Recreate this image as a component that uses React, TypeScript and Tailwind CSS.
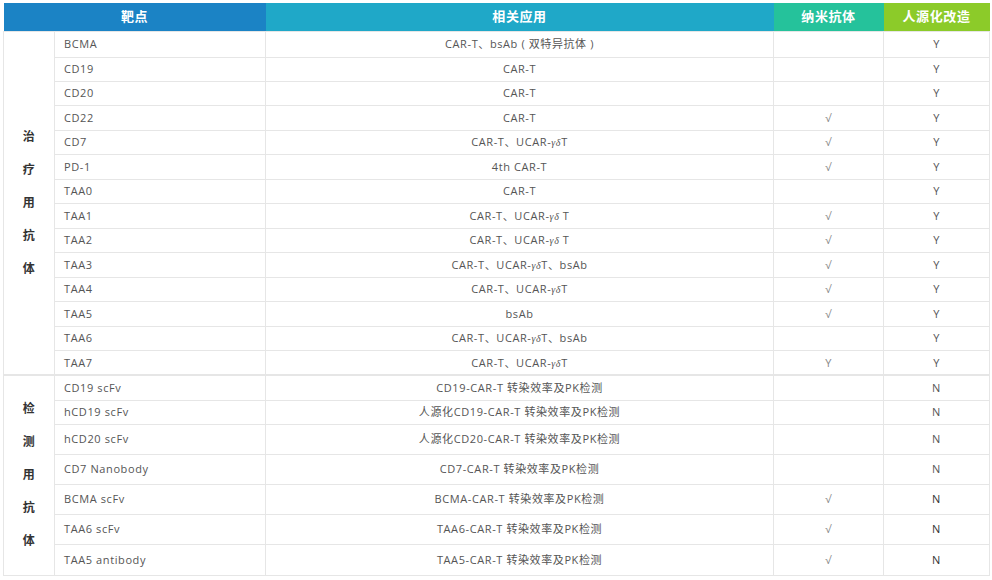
import React from 'react';

type Row = { target: string; app: React.ReactNode; nano?: string; human: string; h: string };

const gd = <span className="italic text-[10px]" style={{ fontFamily: '"Liberation Serif", serif' }}>γδ</span>;

const treat: Row[] = [
    { target: 'BCMA', app: 'CAR-T、bsAb ( 双特异抗体 )', human: 'Y', h: 'h-[26px]' },
    { target: 'CD19', app: 'CAR-T', human: 'Y', h: 'h-[24px]' },
    { target: 'CD20', app: 'CAR-T', human: 'Y', h: 'h-[24px]' },
    { target: 'CD22', app: 'CAR-T', nano: '√', human: 'Y', h: 'h-[25px]' },
    { target: 'CD7', app: <>CAR-T、UCAR-{gd}T</>, nano: '√', human: 'Y', h: 'h-[24px]' },
    { target: 'PD-1', app: '4th CAR-T', nano: '√', human: 'Y', h: 'h-[25px]' },
    { target: 'TAA0', app: 'CAR-T', human: 'Y', h: 'h-[24px]' },
    { target: 'TAA1', app: <>CAR-T、UCAR-{gd} T</>, nano: '√', human: 'Y', h: 'h-[25px]' },
    { target: 'TAA2', app: <>CAR-T、UCAR-{gd} T</>, nano: '√', human: 'Y', h: 'h-[24px]' },
    { target: 'TAA3', app: <>CAR-T、UCAR-{gd}T、bsAb</>, nano: '√', human: 'Y', h: 'h-[25px]' },
    { target: 'TAA4', app: <>CAR-T、UCAR-{gd}T</>, nano: '√', human: 'Y', h: 'h-[24px]' },
    { target: 'TAA5', app: 'bsAb', nano: '√', human: 'Y', h: 'h-[25px]' },
    { target: 'TAA6', app: <>CAR-T、UCAR-{gd}T、bsAb</>, human: 'Y', h: 'h-[24px]' },
    { target: 'TAA7', app: <>CAR-T、UCAR-{gd}T</>, nano: 'Y', human: 'Y', h: 'h-[25px]' },
];

const detect: Row[] = [
    { target: 'CD19 scFv', app: 'CD19-CAR-T 转染效率及PK检测', human: 'N', h: 'h-[25px]' },
    { target: 'hCD19 scFv', app: '人源化CD19-CAR-T 转染效率及PK检测', human: 'N', h: 'h-[24px]' },
    { target: 'hCD20 scFv', app: '人源化CD20-CAR-T 转染效率及PK检测', human: 'N', h: 'h-[30px]' },
    { target: 'CD7 Nanobody', app: 'CD7-CAR-T 转染效率及PK检测', human: 'N', h: 'h-[30px]' },
    { target: 'BCMA scFv', app: 'BCMA-CAR-T 转染效率及PK检测', nano: '√', human: 'N', h: 'h-[30px]' },
    { target: 'TAA6 scFv', app: 'TAA6-CAR-T 转染效率及PK检测', nano: '√', human: 'N', h: 'h-[30px]' },
    { target: 'TAA5 antibody', app: 'TAA5-CAR-T 转染效率及PK检测', nano: '√', human: 'N', h: 'h-[31px]' },
];

function Group({ label, rows, top }: { label: string; rows: Row[]; top?: boolean }) {
    return (
        <>
            {rows.map((r, i) => {
                const sep = i === 0 && !top ? 'border-t-2' : '';
                return (
                    <tr key={r.target} className={r.h}>
                        {i === 0 && (
                            <td rowSpan={rows.length} className={`border border-[#e6e6e6] align-middle ${sep}`}>
                                <div className="flex flex-col items-center gap-[15px] font-bold text-[12px] text-[#333]">
                                    {label.split('').map((c, k) => <span key={k}>{c}</span>)}
                                </div>
                            </td>
                        )}
                        <td className={`border border-[#e6e6e6] pl-[9px] pt-px ${sep}`}>{r.target}</td>
                        <td className={`border border-[#e6e6e6] text-center pt-px ${sep}`}>{r.app}</td>
                        <td className={`border border-[#e6e6e6] text-center pt-px text-[#888] ${sep}`}>{r.nano}</td>
                        <td className={`border border-[#e6e6e6] text-center pt-px ${r.human === 'N' && r.nano ? 'text-[#333]' : ''} ${sep}`}>{r.human}</td>
                    </tr>
                );
            })}
        </>
    );
}

export default function App() {
    return (
        <div className="w-[992px] h-[580px] bg-white pt-[3px] pl-[3px]" style={{ fontFamily: '"Open Sans", "Noto Sans CJK SC", sans-serif' }}>
            <table className="border-collapse table-fixed w-[986px] text-[11px] text-[#555] tracking-[0.6px]">
                <colgroup>
                    <col className="w-[51px]" />
                    <col className="w-[211px]" />
                    <col className="w-[508px]" />
                    <col className="w-[110px]" />
                    <col className="w-[106px]" />
                </colgroup>
                <thead>
                    <tr className="h-[28px] text-white text-[13px]">
                        <th colSpan={2} className="bg-[#1b83c5] font-bold">靶点</th>
                        <th className="bg-[#1fa8c8] font-bold">相关应用</th>
                        <th className="bg-[#25c29b] font-bold">纳米抗体</th>
                        <th className="bg-[#8ccb29] font-bold">人源化改造</th>
                    </tr>
                </thead>
                <tbody>
                    <Group label="治疗用抗体" rows={treat} top />
                    <Group label="检测用抗体" rows={detect} />
                </tbody>
            </table>
        </div>
    );
}
